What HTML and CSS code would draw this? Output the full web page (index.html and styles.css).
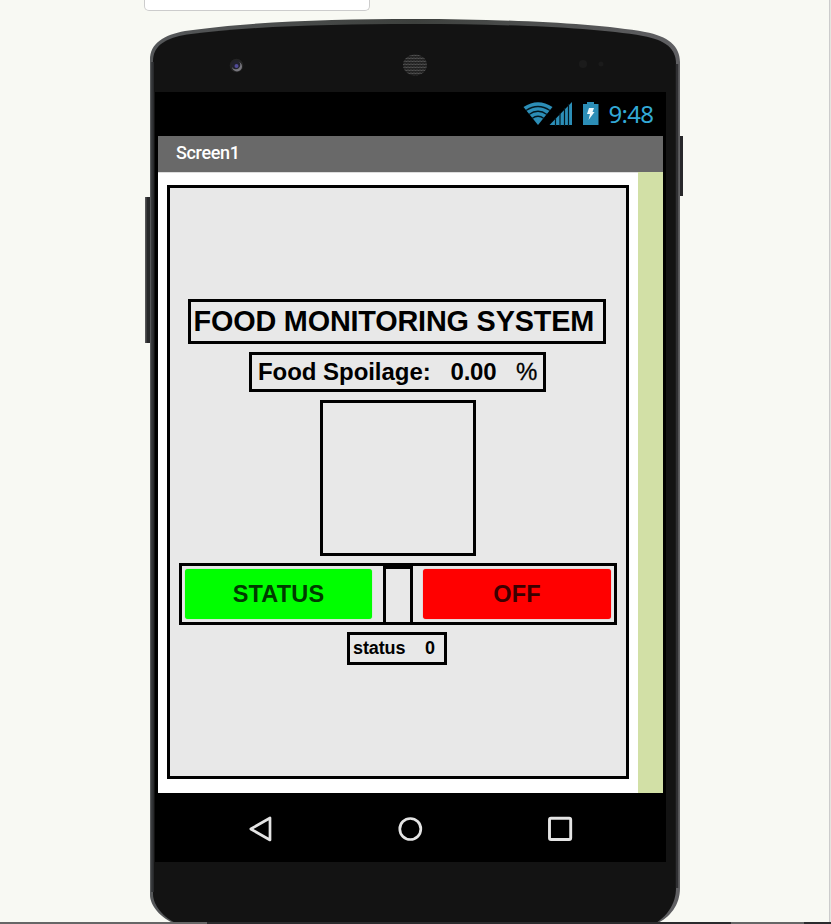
FILE: index.html
```html
<!DOCTYPE html>
<html lang="en">
<head>
<meta charset="utf-8">
<title>Screen1</title>
<link rel="stylesheet" href="styles.css">
</head>
<body>
<div class="page">
  <div class="top-field"></div>
  <div class="phone">
    <svg class="shell" width="538" height="907" viewBox="145 19 538 907">
      <defs>
        <linearGradient id="rim" x1="150" x2="680" y1="0" y2="0" gradientUnits="userSpaceOnUse">
          <stop offset="0" stop-color="#56585a"/><stop offset=".5" stop-color="#3d403d"/><stop offset="1" stop-color="#606063"/>
        </linearGradient>
        <pattern id="mesh" width="3" height="3" patternUnits="userSpaceOnUse">
          <path d="M0 .5L1.500 2L3 .5" fill="none" stroke="#666" stroke-width=".9"/>
        </pattern>
      </defs>
      <path d="M145 197h6v146h-6z" fill="#28292a"/>
      <path d="M145 197h1.500v146h-1.500z" fill="#555"/>
      <path d="M678 136h5v60h-5z" fill="#28282a"/>
      <path d="M150 60C150 43 164 35 185 31C245 22 330 19 415 19S595 23 645 32C668 36 680 46 680 62V888C680 907 668 920 651 926H182C164 922 150 907 150 895Z" fill="url(#rim)"/>
      <path d="M153 61C153 46 165 38 187 34.500C255 26 330 24 415 24S590 27 643 36C665 40 676 48 676 64V888C676 906 664 920 650 926H184C167 922 153 907 153 894Z" fill="#131313"/>
      <path d="M152.500 62V892" stroke="#303235" stroke-width="2.500"/>
      <path d="M677 64V888" stroke="#303033" stroke-width="2.500"/>
      <circle cx="236.500" cy="65.500" r="6.800" fill="#242424"/>
      <circle cx="237" cy="66.500" r="5" fill="#77767d"/>
      <circle cx="235.800" cy="64.800" r="4.500" fill="#22222b"/>
      <circle cx="236.500" cy="66" r="2" fill="#514b98"/>
      <ellipse cx="415" cy="65" rx="12" ry="10.500" fill="#222"/>
      <ellipse cx="415" cy="65" rx="12" ry="10.500" fill="url(#mesh)"/>
      <circle cx="583" cy="64" r="4" fill="#1b1b1b"/>
      <circle cx="601" cy="64" r="2.500" fill="#1b1b1b"/>
    </svg>
    <div class="display">
      <div class="statusbar">
        <svg width="76" height="26" viewBox="523 101 76 26">
          <path d="M523.500 107Q538 97.500 552.500 107L538 125Z" fill="#2c8eb7"/>
          <g fill="none" stroke="#03171f" stroke-width="1.300"><path d="M526 110.500Q538 102.500 550 110.500"/><path d="M529 114.500Q538 108 547 114.500"/><path d="M532 118.500Q538 114 544 118.500"/></g>
          <path d="M549.500 125L572 102V125Z" fill="#2c8eb7"/>
          <path d="M555.500 118V126M560 113V126M564.500 108V126M568.500 104V126" stroke="#03171f" stroke-width="1.200"/>
          <path d="M583 104H587V102H594V104H598.500V125H583Z" fill="#2c8eb7"/>
          <path d="M589 108H594L592.500 112H594.500L588.500 120L590 114H587Z" fill="#eef8fc"/>
        </svg>
        <span class="clock">9:48</span>
      </div>
      <div class="titlebar">Screen1</div>
      <div class="workspace">
        <div class="canvas">
          <div class="arrangement">
            <div class="box heading">FOOD MONITORING SYSTEM</div>
            <div class="box spoilage"><span class="label">Food Spoilage:</span><span class="value">0.00</span><span class="unit">%</span></div>
            <div class="box image"></div>
            <div class="box buttons">
              <div class="btn green">STATUS</div>
              <div class="box slot"></div>
              <div class="btn red">OFF</div>
            </div>
            <div class="box state"><span class="state-label">status</span><span>0</span></div>
          </div>
        </div>
        <div class="scroll"></div>
      </div>
      <div class="navbar">
        <svg width="26" height="28" viewBox="247 815 26 28"><path d="M250.800 829L270 818V840Z" fill="none" stroke="#e4e4e4" stroke-width="2.700" stroke-linejoin="round"/></svg>
        <svg width="26" height="28" viewBox="397 815 26 28"><circle cx="410.300" cy="829" r="10.500" fill="none" stroke="#e4e4e4" stroke-width="2.700"/></svg>
        <svg width="26" height="28" viewBox="547 815 26 28"><rect x="549.500" y="818.300" width="21.200" height="21.200" rx="1.500" fill="none" stroke="#e4e4e4" stroke-width="2.900"/></svg>
      </div>
    </div>
  </div>
  <div class="edge"></div>
  <div class="bottom-line"><i></i><b></b><i class="right"></i></div>
</div>
</body>
</html>
```
FILE: styles.css
```css
* { box-sizing: border-box; }
html, body { margin: 0; height: 924px; overflow: hidden; }
svg { display: block; flex: none; }
.page { position: relative; width: 831px; height: 924px; overflow: hidden; background: #f8f9f3; font-family: "Liberation Sans", sans-serif; }
.top-field { width: 226px; height: 11px; margin-left: 144px; background: #fff; border: 1px solid #ccc; border-top: 0; border-radius: 0 0 5px 5px; }
.phone { position: relative; width: 538px; height: 907px; margin: 8px 0 0 145px; padding: 73px 0 0 10px; }
.shell { position: absolute; left: 0; top: 0; }
.display { position: relative; width: 511px; height: 770px; background: #000; }
.statusbar { display: flex; height: 44px; padding: 9px 0 0 368px; }
.clock { margin: -1px 0 0 9.5px; font: 24px/28px "Noto Sans", sans-serif; color: #33a9d6; letter-spacing: -.7px; }
.titlebar { width: 505px; height: 36px; margin-left: 3px; padding-left: 18px; background: #696969; color: #fff; font: 500 18px/34px Roboto, sans-serif; letter-spacing: -.35px; }
.workspace { display: flex; width: 505px; height: 621px; margin-left: 3px; }
.canvas { width: 480px; padding: 12px 9px 14px; background: #fff; border-top: 1px solid #ddd; }
.scroll { width: 25px; background: #d2e0a6; }
.arrangement { display: flex; flex-direction: column; align-items: center; height: 594px; padding: 111px 0 0; border: 3px solid #000; background: #e8e8e8; }
.box { border: 3px solid #000; flex: none; }
.heading { width: 418px; height: 45px; margin-left: -2px; padding-left: 2.5px; font-weight: bold; font-size: 28.8px; line-height: 39px; letter-spacing: -.17px; white-space: nowrap; }
.spoilage { display: flex; width: 297px; height: 40px; margin: 8px 1px 0 0; padding-left: 6px; font-size: 24px; line-height: 33px; font-weight: bold; white-space: nowrap; }
.label { width: 192.500px; letter-spacing: -.05px; }
.value { width: 65.500px; letter-spacing: -.2px; }
.unit { font-weight: normal; -webkit-text-stroke: .3px #000; }
.image { width: 156px; height: 156px; margin-top: 8px; }
.buttons { display: flex; width: 438px; height: 62px; margin-top: 7px; padding-left: 3px; }
.btn { height: 50px; margin-top: 3px; border-radius: 3px; text-align: center; font-weight: bold; font-size: 23.5px; line-height: 50px; letter-spacing: .2px; }
.green { width: 187px; background: #0f0; color: #003b00; box-shadow: 0 0 1px #5d5; }
.red { width: 188px; background: #f00; color: #3b0000; box-shadow: 0 0 1px #d55; }
.slot { width: 30px; height: 56px; margin: 0 10px 0 11px; border-bottom: 0; }
.state { display: flex; width: 100px; height: 33px; margin: 7px 2px 0 0; padding-left: 3px; font-weight: bold; font-size: 18px; line-height: 27px; letter-spacing: -.1px; }
.state-label { width: 72px; }
.navbar { display: flex; gap: 124px; padding: 22px 0 0 92px; }
.edge { position: absolute; top: 0; right: 0; width: 2px; height: 922px; background: #e4e5df; border-left: 1px solid #ccc; }
.bottom-line { position: absolute; left: 0; bottom: 0; display: flex; width: 831px; height: 2px; background: #2b2b2d; }
.bottom-line i { width: 207px; background: #666; }
.bottom-line b { width: 524px; }
.bottom-line .right { width: 73px; }
```
